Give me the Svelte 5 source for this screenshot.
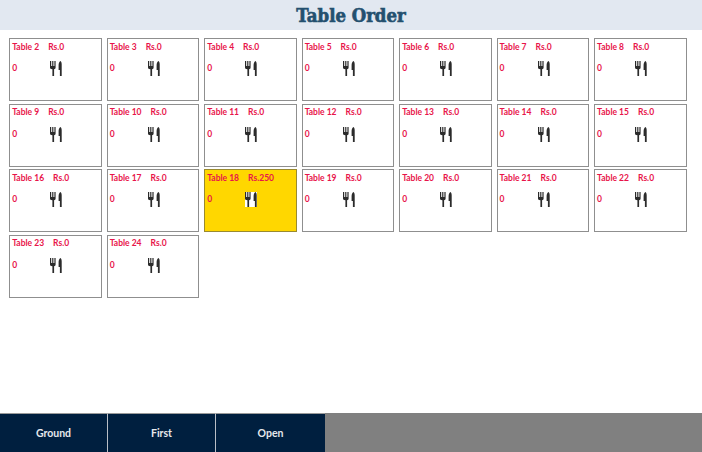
<script>
  const tables = [];
  for (let n = 2; n <= 24; n++) tables.push({ n, amount: n === 18 ? 250 : 0 });
  const floors = ['Ground', 'First', 'Open'];
</script>

<div class="page">
  <header class="head"><h1>Table Order</h1></header>
  <main class="grid">
    {#each tables as t}
      <div class="card" class:busy={t.amount > 0}>
        <div class="top"><span>Table {t.n}</span><span>Rs.{t.amount}</span></div>
        <div class="mid">
          <span class="count">0</span>
          <span class="icon" class:lit={t.amount > 0}>
            <svg viewBox="0 0 12 15" width="12" height="15">
              <path d="M0 0h1.200v5h1v-5h1.200v5h1v-5h1.200v6.500c0 1-.7 1.600-1.500 1.800v6.700h-1.700v-6.700C.7 8.100 0 7.500 0 6.500z" fill="#2b2b2b"/>
              <path d="M10.400 0c.9.400 1.300 1.500 1.300 3.500v11.500h-1.800v-6h-1.300v-4.500c0-2 .6-3.600 1.800-4.500z" fill="#2b2b2b"/>
            </svg>
          </span>
        </div>
      </div>
    {/each}
  </main>
  <footer class="bar">
    {#each floors as f}
      <button class="floor">{f}</button>
    {/each}
  </footer>
</div>

<style>
  :global(body) { margin: 0; background: #fff; }
  .page {
    width: 702px;
    height: 452px;
    display: flex;
    flex-direction: column;
    overflow: hidden;
    font-family: "Lato", "Liberation Sans", sans-serif;
  }
  .head {
    height: 30px;
    background: #e2e8f1;
    display: flex;
    align-items: center;
    justify-content: center;
    flex: none;
  }
  h1 {
    margin: 0;
    font-family: "DejaVu Serif", "Liberation Serif", serif;
    font-stretch: condensed;
    font-weight: 700;
    font-size: 18.4px;
    color: #24506f;
    -webkit-text-stroke: 0.6px #24506f;
  }
  .grid {
    flex: 1;
    display: grid;
    grid-template-columns: repeat(7, 92.67px);
    grid-auto-rows: 63px;
    column-gap: 4.83px;
    row-gap: 2.67px;
    align-content: start;
    padding: 8px 0 0 9.2px;
  }
  .card {
    box-sizing: border-box;
    border: 1px solid #8f8f8f;
    background: #fff;
    color: #e8144a;
    font-size: 8.5px;
    font-weight: 700;
    padding: 2px 2px 0 2px;
  }
  .card.busy {
    background: #ffd700;
    border-color: #998a30;
  }
  .top { display: flex; gap: 9px; height: 11px; align-items: center; }
  .mid {
    display: flex;
    align-items: flex-start;
    margin-top: 9px;
  }
  .count { width: 38px; margin-top: 2px; }
  .icon { display: block; height: 15px; line-height: 0; }
  .icon.lit { background: #fff; }
  .bar {
    height: 39px;
    flex: none;
    background: #808080;
    display: flex;
  }
  .floor {
    width: 108px;
    height: 39px;
    box-sizing: border-box;
    margin: 0;
    padding: 0;
    background: #001f3f;
    color: #e6e8ec;
    font-family: inherit;
    font-size: 10.5px;
    font-weight: 700;
    border: 0;
    border-top: 1px solid #9a9a9a;
    border-right: 1px solid #b9bec6;
  }
  .floor:last-child { border-right: 0; width: 109px; }
</style>
